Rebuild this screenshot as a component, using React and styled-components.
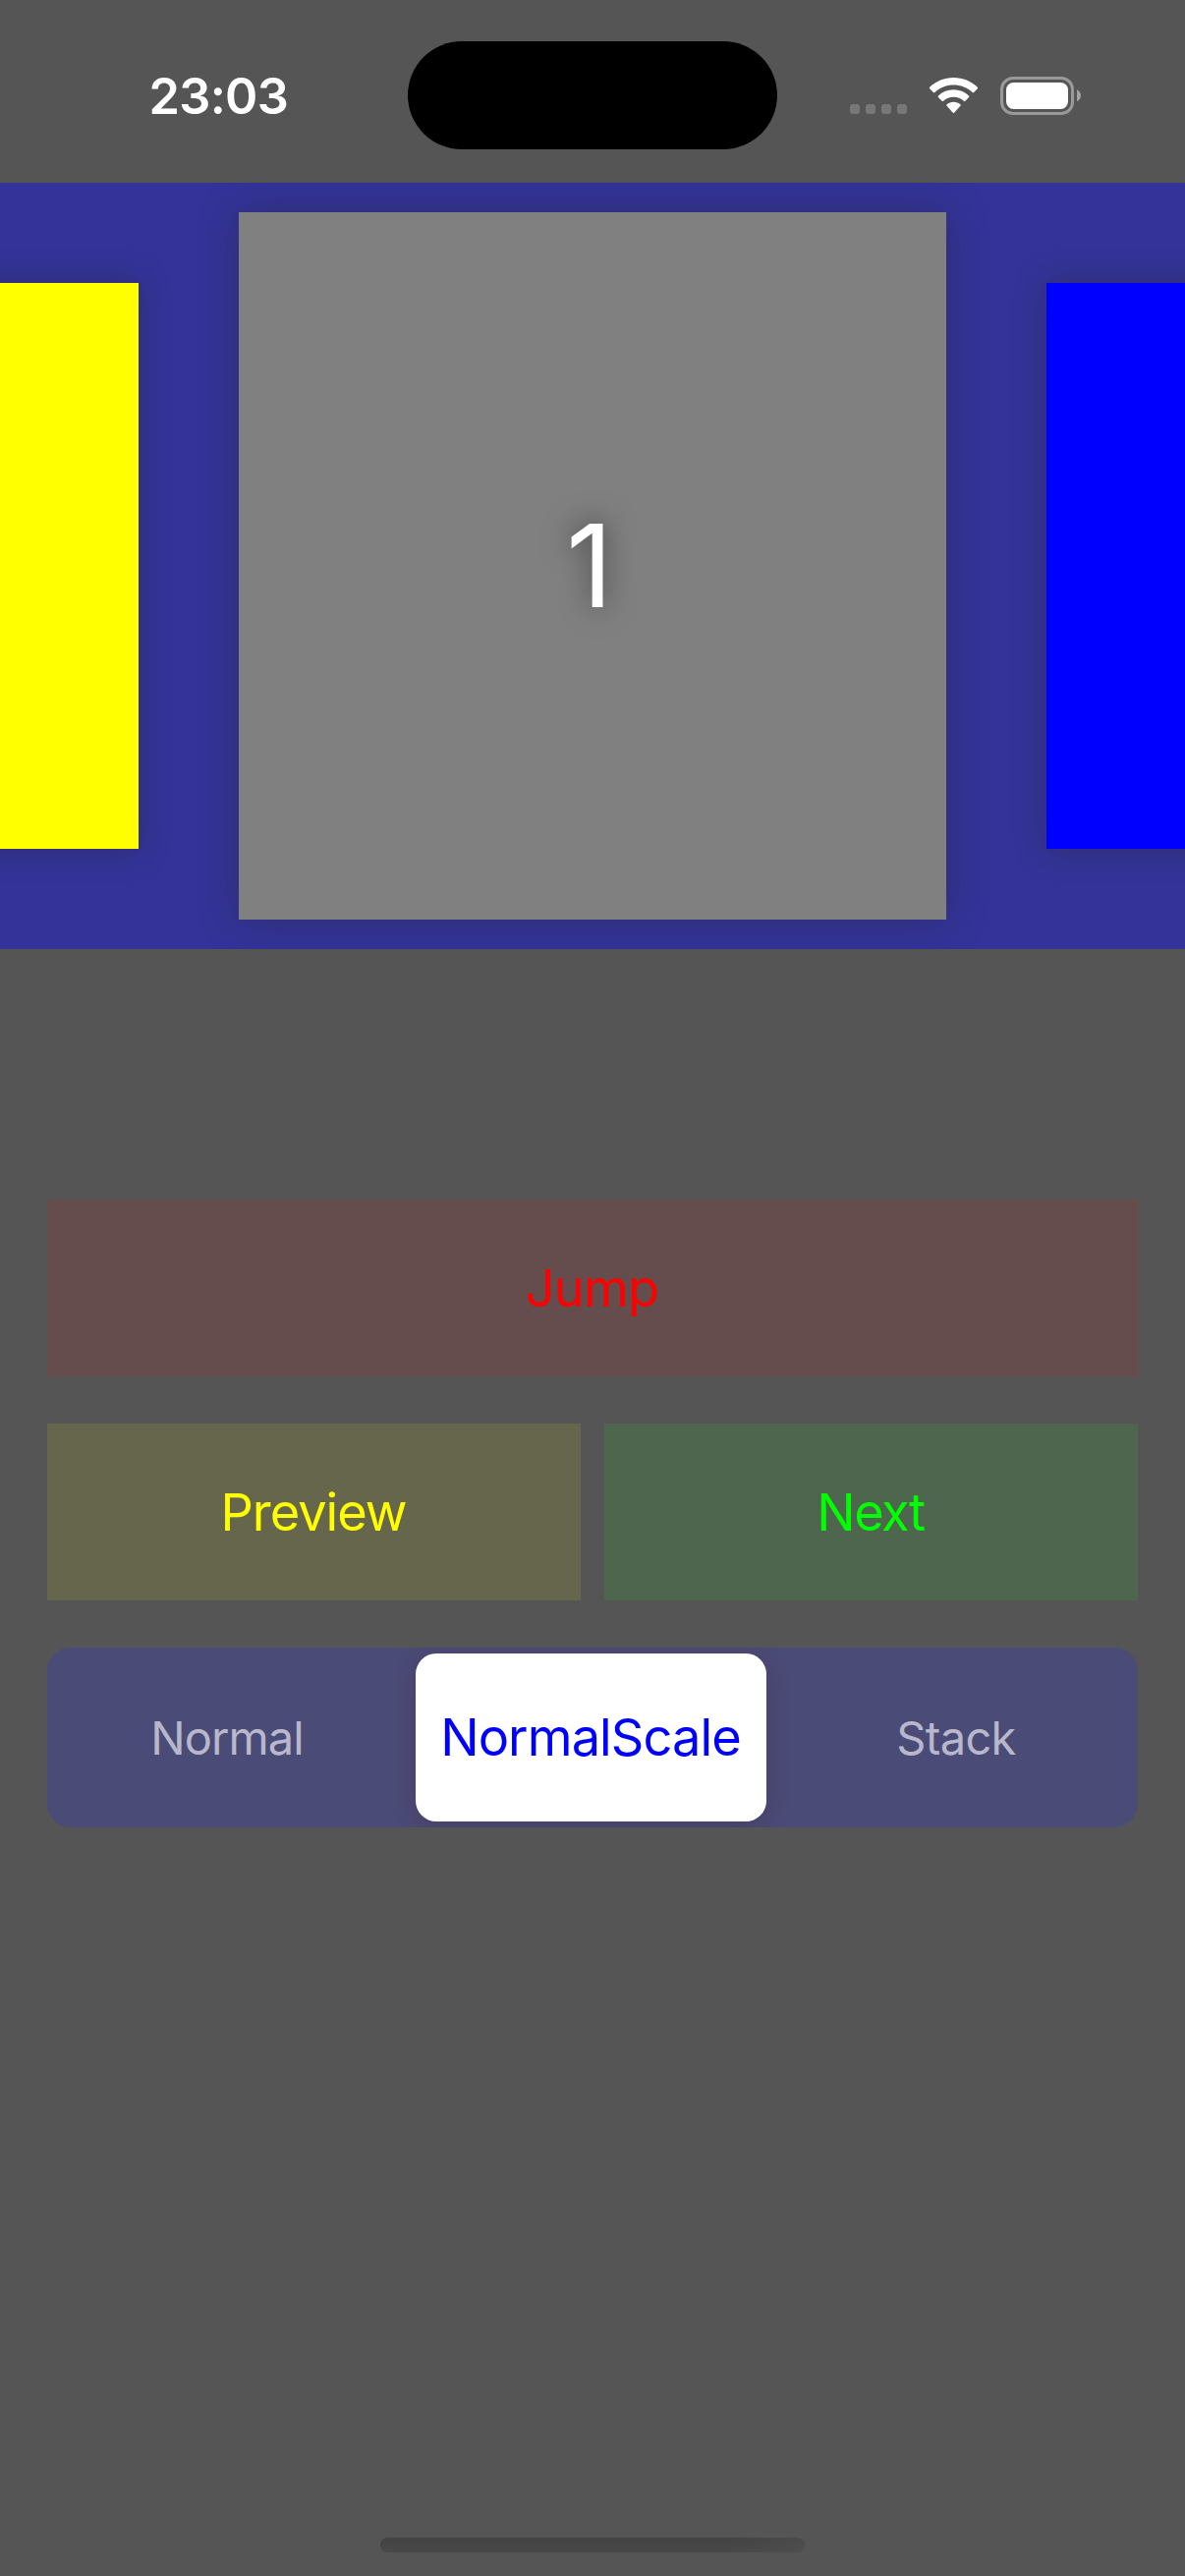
import React from "react";
import styled, { createGlobalStyle } from "styled-components";

const GlobalStyle = createGlobalStyle`
  * { box-sizing: border-box; }
  body { margin: 0; background: #555555; }
`;

const Screen = styled.div`
  width: 1206px;
  height: 2622px;
  display: flex;
  flex-direction: column;
  background: #555555;
  font-family: Inter, "Liberation Sans", sans-serif;
  overflow: hidden;
`;

const StatusBar = styled.header`
  height: 186px;
  flex: none;
  display: grid;
  grid-template-columns: 415px 376px 415px;
  align-items: start;
`;

const Clock = styled.time`
  padding: 68px 0 0 151.5px;
  font-size: 50.5px;
  line-height: 60px;
  font-weight: 600;
  letter-spacing: -0.7px;
  color: #fff;
`;

const Island = styled.div`
  height: 110px;
  margin-top: 42px;
  border-radius: 55px;
  background: #000;
`;

const Indicators = styled.div`
  display: flex;
  align-items: flex-end;
  height: 117px;
  padding-left: 74px;
`;

const Signal = styled.div`
  display: flex;
  gap: 6px;
  padding-bottom: 1px;
`;

const SignalDot = styled.i`
  width: 10px;
  height: 10px;
  border-radius: 3px;
  background: #777777;
`;

const WifiIcon = styled.svg`
  display: block;
  width: 51px;
  height: 37px;
  margin: 0 22px 1px 22px;
`;

const BatteryIcon = styled.svg`
  display: block;
  width: 83px;
  height: 39px;
`;

const Carousel = styled.section`
  height: 780px;
  flex: none;
  display: flex;
  justify-content: center;
  align-items: center;
  gap: 102px;
  background: #333399;
  overflow: hidden;
`;

const Card = styled.article`
  flex: none;
  width: ${(p) => p.$size}px;
  height: ${(p) => p.$size}px;
  display: flex;
  align-items: center;
  justify-content: center;
  background: ${(p) => p.$color};
  box-shadow: 0 0 ${(p) => p.$size / 20}px rgba(40, 40, 40, 0.4);
`;

const CardNumber = styled.span`
  padding-right: 6px;
  font-size: 116.5px;
  line-height: 144px;
  color: #fff;
  text-shadow: 0 0 30px rgba(0, 0, 0, 0.55);
`;

const Controls = styled.main`
  display: grid;
  grid-template-columns: 1fr 1fr;
  gap: 48px 24px;
  padding: 255px 48px 0;
`;

const ActionButton = styled.button`
  grid-column: span ${(p) => p.$span || 1};
  height: 180px;
  padding: 0 1px 0 0;
  border: 0;
  font: 400 52.3px/64px Inter, "Liberation Sans", sans-serif;
  letter-spacing: ${(p) => p.$tracking || 0}px;
  color: ${(p) => p.$color};
  background: ${(p) => p.$fill};
`;

const Segments = styled.div`
  grid-column: span 2;
  height: 183px;
  padding: 6px;
  display: grid;
  grid-template-columns: 369px 357px 372px;
  border-radius: 24px;
  background: #4b4b77;
  overflow: hidden;
`;

const Segment = styled.button`
  padding: ${(p) => p.$inset || "0"};
  border: 0;
  border-radius: 21px;
  font: 400 ${(p) => (p.$active ? 52.3 : 47)}px/64px Inter, "Liberation Sans", sans-serif;
  letter-spacing: ${(p) => p.$tracking || 0}px;
  color: ${(p) => (p.$active ? "#0000ff" : "#b8b7cc")};
  background: ${(p) => (p.$active ? "#fff" : "transparent")};
  box-shadow: ${(p) => (p.$active ? "0 6px 22px rgba(60, 40, 60, 0.3)" : "none")};
`;

const HomeIndicator = styled.div`
  width: 432px;
  height: 15px;
  margin: auto auto 24px;
  border-radius: 8px;
  background: linear-gradient(90deg, transparent 82%, rgba(85, 85, 85, 0.45)),
    linear-gradient(#424242, #494949);
`;

export default function App() {
  return (
    <>
      <GlobalStyle />
      <Screen>
        <StatusBar>
          <Clock>23:03</Clock>
          <Island />
          <Indicators>
            <Signal>
              <SignalDot />
              <SignalDot />
              <SignalDot />
              <SignalDot />
            </Signal>
            <WifiIcon viewBox="0 0 52 38" fill="#fff">
              <path d="M26 0C16.500 0 7.500 3.700 1 10Q.2 10.800 1 11.600L4.800 15.400Q5.500 16.100 6.300 15.400C11.700 10.400 18.600 7.700 26 7.700S40.300 10.400 45.700 15.400Q46.500 16.100 47.200 15.400L51 11.600Q51.800 10.800 51 10C44.500 3.700 35.500 0 26 0Z" />
              <path d="M26 12.700C20 12.700 14.300 15 10 19Q9.200 19.800 10 20.600L13.800 24.500Q14.500 25.200 15.300 24.500C18.200 21.900 22 20.400 26 20.400S33.800 21.900 36.700 24.500Q37.500 25.200 38.200 24.500L42 20.600Q42.800 19.800 42 19C37.700 15 32 12.700 26 12.700Z" />
              <path d="M26 25.400C23.300 25.400 20.800 26.300 18.900 28Q18.100 28.800 18.900 29.600L25.300 36.600Q26 37.400 26.700 36.600L33.100 29.600Q33.900 28.800 33.100 28C31.200 26.300 28.700 25.400 26 25.400Z" />
            </WifiIcon>
            <BatteryIcon viewBox="0 0 83 39">
              <rect x="1.500" y="1.500" width="72" height="36" rx="11.500" fill="none" stroke="#999" strokeWidth="3" />
              <rect x="6" y="6" width="63" height="27" rx="7.500" fill="#fff" />
              <path d="M78 13.300Q82 15.500 82 19.300T78 25.300Z" fill="#a3a3a3" />
            </BatteryIcon>
          </Indicators>
        </StatusBar>
        <Carousel>
          <Card $size={576} $color="#ffff00" />
          <Card $size={720} $color="#808080">
            <CardNumber>1</CardNumber>
          </Card>
          <Card $size={576} $color="#0000ff" />
        </Carousel>
        <Controls>
          <ActionButton $span={2} $color="#ff0000" $fill="#644d4c" $tracking={-0.8}>Jump</ActionButton>
          <ActionButton $color="#ffff00" $fill="#66664c" $tracking={-1}>Preview</ActionButton>
          <ActionButton $color="#00ff00" $fill="#4e664e" $tracking={-1.5}>Next</ActionButton>
          <Segments>
            <Segment $tracking={-0.9} $inset="0 15px 0 0">Normal</Segment>
            <Segment $active $tracking={-0.9} $inset="0 1px 2px 0">NormalScale</Segment>
            <Segment $tracking={-0.7} $inset="0 0 0 14px">Stack</Segment>
          </Segments>
        </Controls>
        <HomeIndicator />
      </Screen>
    </>
  );
}
